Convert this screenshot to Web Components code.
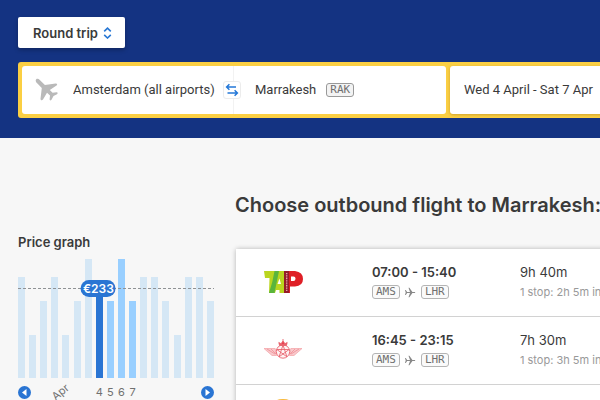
<!DOCTYPE html>
<html lang="en">
<head>
<meta charset="utf-8">
<title>Flights to Marrakesh</title>
<style>
html { overflow: hidden; }
body { margin: 0; background: #f7f7f7; color: #3a3a3a; font: 13px/16px Inter, "Liberation Sans", sans-serif; }
</style>
</head>
<body>
<flight-page></flight-page>
<script>
const define = (name, html, setup) => {
  const template = document.createElement("template");
  template.innerHTML = html;
  customElements.define(name, class extends HTMLElement {
    constructor() {
      super();
      this.attachShadow({ mode: "open" }).append(template.content.cloneNode(true));
    }
    connectedCallback() {
      if (setup && !this.ready) { this.ready = true; setup(this, this.shadowRoot); }
    }
  });
};

define("airport-code", `
<style>
:host { display: inline-block; box-sizing: border-box; height: 14px; padding: 0 3px; border: 1px solid #b4b4b4; border-radius: 3px; background: #fafafa; color: #707070; font: 11px/12px "DejaVu Sans Mono", monospace; }
:host([strong]) { border-color: #999; background: #f3f3f3; }
</style><slot></slot>`);

define("trip-type", `
<style>
:host { display: inline-grid; align-items: center; background: #fff; border-radius: 2px; box-shadow: 0 2px 4px rgba(0,0,0,.25); }
select { grid-area: 1 / 1; appearance: none; height: 31px; margin: 0; padding: 0 27px 0 15px; border: 0; background: none; color: inherit; font: inherit; font-weight: 600; }
svg { grid-area: 1 / 1; justify-self: end; margin-right: 13px; pointer-events: none; }
</style>
<select aria-label="Trip type"><option>Round trip</option></select>
<svg width="9" height="12" viewBox="0 0 9 12" fill="none" stroke="#2777d4" stroke-width="1.6"><path d="M1.2 4.3 4.5 1.2l3.3 3.1M1.2 7.9l3.3 3.1 3.3-3.1"/></svg>`);

define("search-bar", `
<style>
:host { display: flex; gap: 4px; padding: 4px; background: #fbcf43; border-radius: 3px; font-family: Roboto, "Liberation Sans", sans-serif; }
.route { flex: 0 0 424px; display: grid; grid-template-columns: 1fr 1fr; height: 48px; background: #fff; border-radius: 3px; position: relative; }
.end { display: flex; align-items: center; min-width: 0; }
.from { padding-left: 13px; gap: 14px; border-right: 1px solid #f2f2f2; }
.to { padding-left: 21px; gap: 10px; }
input { min-width: 0; margin: 0; padding: 0; border: 0; background: none; color: inherit; font: inherit; }
.from input { flex: 1; }
.to input { field-sizing: content; }
.swap { position: absolute; left: 50%; top: 50%; transform: translate(-50%, -50%); margin-left: -2px; width: 18px; height: 18px; padding: 0; border: 1px solid #ececec; border-radius: 3px; background: #fff; display: grid; place-items: center; }
.date { flex: 1; text-align: left; padding: 0 14px; border: 0; border-radius: 3px; background: #fff; color: inherit; font: inherit; box-shadow: 0 1px 3px rgba(120,80,0,.35); }
</style>
<div class="route">
  <label class="end from">
    <svg width="24" height="24" viewBox="0 0 24 24" fill="#b9b9b9"><path d="M1.2 1.2C2.3.3 3.7.8 4.800 1.900L9.900 6.900 20.700 5.400C22.200 5.200 22.700 6.600 21.500 7.500L14.800 11.900 17.600 14.800 21.500 14.300C22.900 14.200 23.100 15.500 22 16.200L18.500 18 16.500 21.700C15.800 22.900 14.500 22.600 14.600 21.300L15 17.500 12 14.700 8 21.400C7.100 22.700 5.400 22.300 5.500 20.700L6.800 10.100 1.900 5C.8 3.900.2 2.200 1.200 1.200Z"/></svg>
    <input value="Amsterdam (all airports)" aria-label="From">
  </label>
  <label class="end to"><input value="Marrakesh" aria-label="To"><airport-code strong>RAK</airport-code></label>
  <button class="swap" aria-label="Swap airports"><svg width="14" height="14" viewBox="0 0 14 14" fill="none" stroke="#2478d8" stroke-width="1.5"><path d="M11 4H1.600M4.400 1.200 1.600 4l2.800 2.800M2.500 10h9.900M9.600 7.200l2.800 2.800-2.800 2.800"/></svg></button>
</div>
<button class="date">Wed 4 April - Sat 7 Apr</button>`);

define("price-graph", `
<style>
:host { display: block; }
h2 { margin: 0 0 9px; font-size: 13px; line-height: 16px; font-weight: 600; }
.plot { position: relative; display: flex; justify-content: space-between; align-items: flex-end; height: 119px; }
.bar { width: 7px; background: #d5e7f5; }
.near { background: #99cfff; }
.picked { background: #2a75d3; }
.limit { position: absolute; left: 0; right: 0; top: 29px; height: 1px; background: repeating-linear-gradient(90deg, #8f9295 0 3px, transparent 3px 5px); }
.tag { position: absolute; left: 41%; top: 21px; transform: translateX(-50%); padding: 0 2px; border-radius: 9px; background: #2a75d3; color: #fff; font-size: 12px; line-height: 17px; font-weight: 600; }
.axis { display: grid; grid-template-columns: repeat(18, 7px); justify-content: space-between; justify-items: center; align-items: center; height: 28px; color: #707070; font-size: 11px; }
.axis > * { grid-row: 1; }
.month { grid-column: 4 / 6; transform: rotate(-40deg); }
.d4 { grid-column: 8; }
.d5 { grid-column: 9; }
.d6 { grid-column: 10; }
.d7 { grid-column: 11; }
button { width: 13px; height: 13px; padding: 0; border: 0; border-radius: 50%; background: #2a75d3; display: grid; place-items: center; }
.prev { grid-column: 1; justify-self: start; }
.next { grid-column: 18; justify-self: end; }
</style>
<h2>Price graph</h2>
<div class="plot"><div class="limit"></div></div>
<div class="axis">
<button class="prev" aria-label="Earlier"><svg width="13" height="13" viewBox="0 0 13 13"><path d="M8.500 3v7L4 6.500Z" fill="#fff"/></svg></button>
<span class="month">Apr</span>
<span class="d4">4</span><span class="d5">5</span><span class="d6">6</span><span class="d7">7</span>
<button class="next" aria-label="Later"><svg width="13" height="13" viewBox="0 0 13 13"><path d="M4.500 3v7L9 6.500Z" fill="#fff"/></svg></button>
</div>`, (host, root) => {
  const plot = root.querySelector(".plot"), limit = root.querySelector(".limit");
  [101, 43, 77, 101, 43, 77, 119, 89, 77, 119, 77, 101, 101, 77, 43, 101, 101, 77].forEach((height, i) => {
    const bar = document.createElement("div");
    bar.className = "bar" + (i === 7 ? " picked" : i > 7 && i < 11 ? " near" : "");
    bar.style.height = height + "px";
    plot.insertBefore(bar, limit);
  });
  const tag = document.createElement("div");
  tag.className = "tag";
  tag.textContent = "€233";
  plot.append(tag);
});

define("flight-row", `
<style>
:host { display: grid; grid-template-columns: 108px 148px 1fr; padding: 15px 28px 16px; border-bottom: 1px solid #d2d2d2; background: #fff; }
:host([pending]) .details { display: none; }
.logo { display: flex; align-items: center; height: 36px; }
.times { font-weight: 600; }
.route { display: flex; align-items: center; gap: 5px; margin-top: 5px; }
.stop { margin-top: 4px; color: #999; font-size: 11px; }
</style>
<div class="logo"><slot name="logo"></slot></div>
<div class="details">
  <div class="times"><slot name="times"></slot></div>
  <div class="route"><airport-code>AMS</airport-code><svg width="11" height="11" viewBox="0 0 11 11" fill="#888"><path d="M0 3h.8l1.300 1.900H5L3.500.8h.9L7.400 4.900h2.400q1.200.6 0 1.200H7.400L4.400 10.200H3.500L5 6.100H2.100L.8 8H0l.7-2.500Z"/></svg><airport-code>LHR</airport-code></div>
</div>
<div class="details"><slot></slot><div class="stop"><slot name="stop"></slot></div></div>`);

define("flight-page", `
<style>
:host { display: block; min-width: 960px; }
header { display: grid; gap: 14px; justify-items: start; padding: 17px 18px 20px; background: #143382; }
search-bar { justify-self: stretch; }
.content { display: grid; grid-template-columns: 196px 1fr; column-gap: 21px; padding: 55px 18px 0; }
price-graph { padding-top: 41px; }
h1 { margin: 0 0 31px; font-size: 20px; line-height: 25px; font-weight: 600; }
.results { margin-left: 1px; box-shadow: 0 0 5px rgba(0,0,0,.28); border-radius: 2px 2px 0 0; background: #fff; }
</style>
<header><trip-type></trip-type><search-bar></search-bar></header>
<div class="content">
<price-graph></price-graph>
<main>
<h1>Choose outbound flight to Marrakesh:</h1>
<div class="results">
<flight-row>
<svg slot="logo" width="39" height="22" viewBox="0 0 39 22" role="img" aria-label="TAP">
<path fill="#bad51f" d="M0 0h20v22h-4.500v-3H12l-1 3H5L5.500 7H1Z"/><path fill="#5ab53c" d="M10.500 0H15l-4.500 22H5Q9 10 10.500 0Z"/><path fill="#fff" d="M15.500 7.500 17 13h-3.500Z"/>
<path fill="#df1f26" d="M20 0h11q8 1 8 8 0 7-8 7.500h-5V22h-6Z"/><path fill="#fff" d="M27 5.500h2.500q2 0 2 2.200t-2 2.200H27Z"/><path fill="#941c28" d="M20 0h5v22h-5Z"/><path stroke="#dfa3a8" stroke-width="1.400" stroke-dasharray="1 .7" d="M22.700 2v18"/></svg>
<span slot="times">07:00 - 15:40</span>9h 40m<span slot="stop">1 stop: 2h 5m in</span></flight-row>
<flight-row>
<svg slot="logo" width="38" height="26" viewBox="0 -3 38 26" fill="none" stroke="#e96570" stroke-width=".9" role="img" aria-label="Royal Air Maroc">
<path d="M0 8.500h11.200l1.300 7H8ZM38 8.500H26.800l-1.300 7H30Z" fill="#f8c9cc" stroke="#f3a0a5" stroke-width=".7"/><path d="m3 9 8 5M7 9l5 5M35 9l-8 5M31 9l-5 5" stroke="#f0949b"/>
<circle cx="19" cy="11.500" r="6.700" fill="#fff3f3"/><path d="m19 5 3.900 11.800-10-7.300h12.200l-10 7.300Z"/><path d="M15.500 4.500h7M14.800 2.500l2.200 1.200 2-2.700 2 2.700 2.200-1.200-.8 3h-6.800Z" fill="#e7424f"/><path d="M19-1v3"/></svg>
<span slot="times">16:45 - 23:15</span>7h 30m<span slot="stop">1 stop: 3h 5m in</span></flight-row>
<flight-row pending><svg slot="logo" width="38" height="38" viewBox="0 0 38 38"><circle cx="19" cy="19" r="19" fill="#f8b93b"/><path d="m8 17 11 4 11-9-8 15Z" fill="#17336f"/></svg></flight-row>
</div></main></div>`);
</script>
</body>
</html>
